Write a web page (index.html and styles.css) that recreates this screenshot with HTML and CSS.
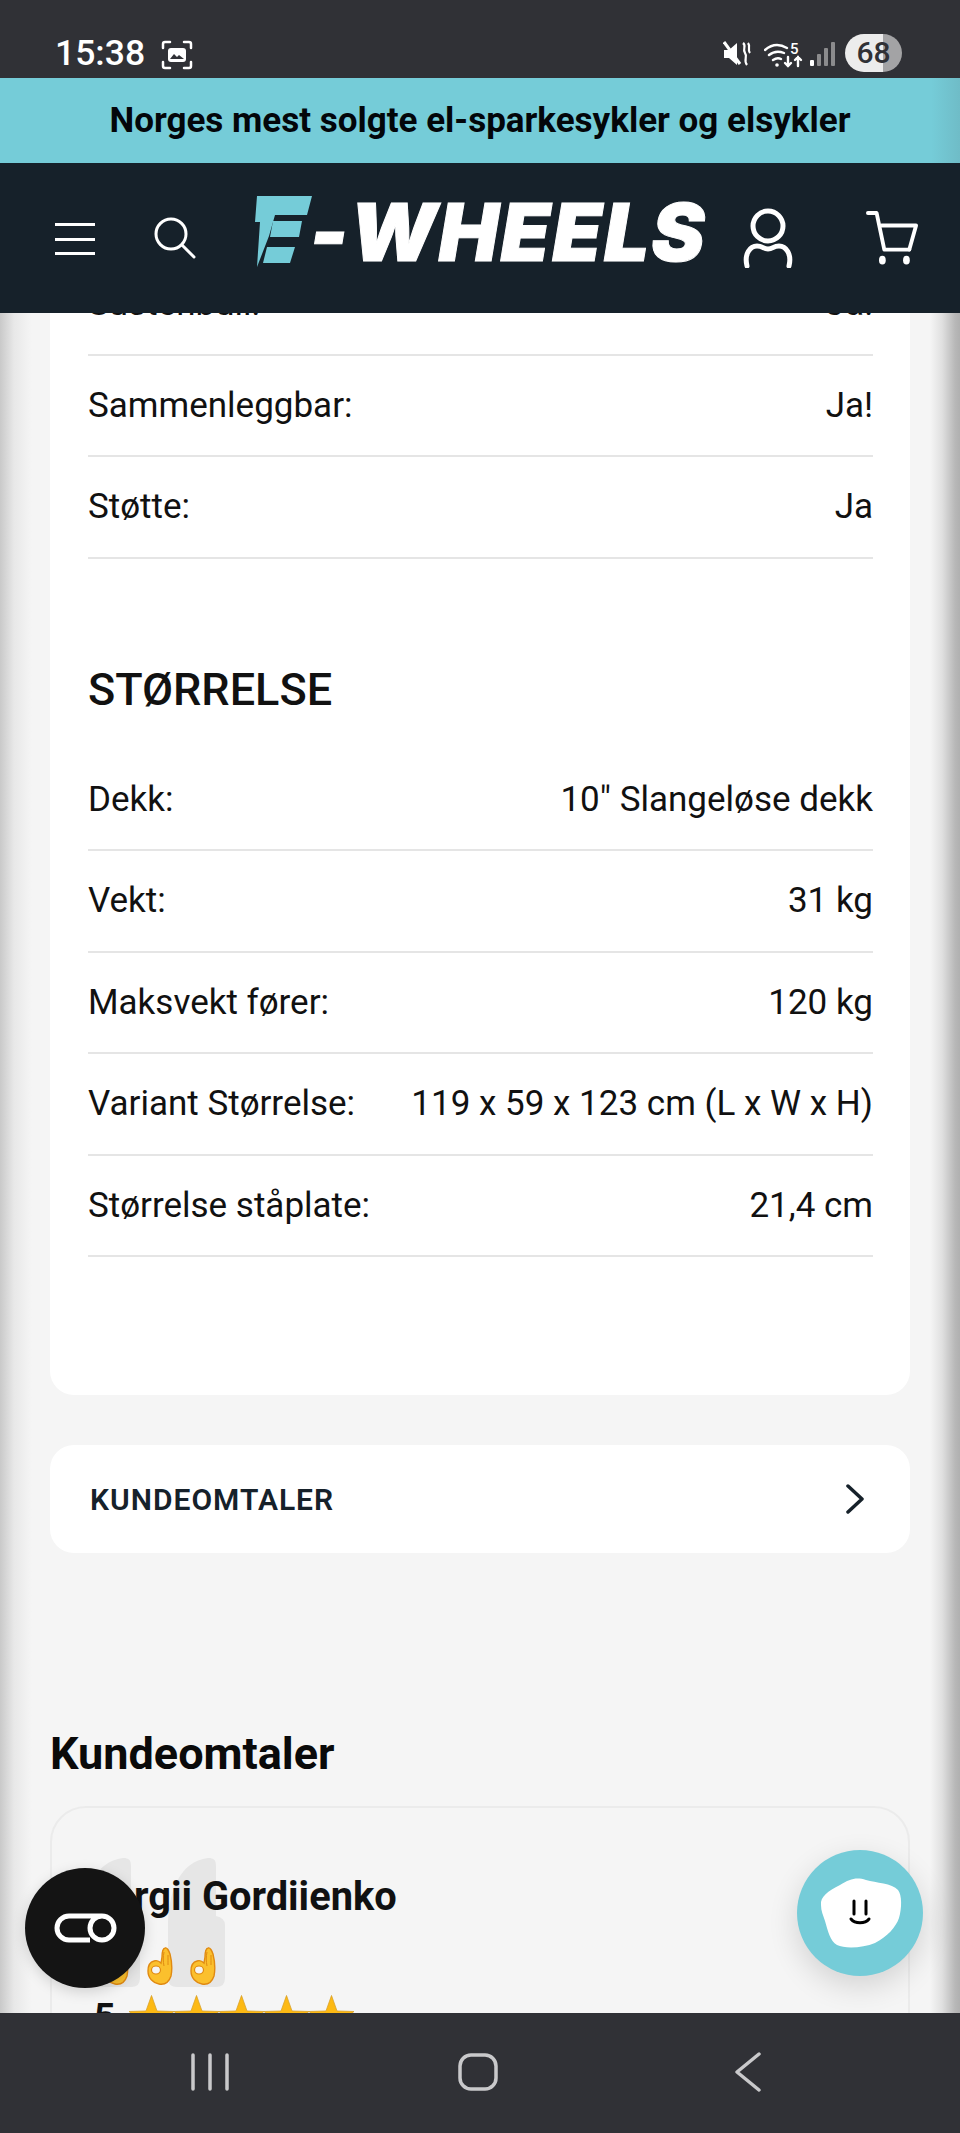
FILE: index.html
```html
<!DOCTYPE html>
<html lang="no">

<head>
    <meta charset="UTF-8">
    <title>E-Wheels</title>
    <link rel="stylesheet" href="styles.css">
</head>

<body>
    <svg class="defs" width="0" height="0">
        <symbol id="okhand" viewBox="0 0 26 38">
            <path d="M18 1c-3 1-3 5-3 9l-1 6c-2-2-4-3-7-2-4 1-6 5-6 10 0 7 5 12 11 13 6 1 10-2 12-8 1-5 1-14-1-22-1-3-3-7-5-6z" fill="#fbc02d" stroke="#e08a12" stroke-width="1.4"/>
            <ellipse cx="9" cy="23" rx="4.5" ry="4" fill="#f5f5f5" stroke="#e08a12" stroke-width="1.2"/>
            <path d="M17 5c-1 5-1 9 0 14M21 8c0 4 0 7 0 10" fill="none" stroke="#e08a12" stroke-width="1"/>
        </symbol>
        <symbol id="star" viewBox="0 0 45 43">
            <path d="M22.5 0.5l5.5 15.500 17 0.500-13 10 5 16-14.500-9.500-14.500 9.500 5-16-13-10 17-0.500z" fill="#fdb913" stroke="#d9a227" stroke-width="0.8"/>
        </symbol>
    </svg>

    <div class="phone">
        <div class="statusbar">
            <div class="status-left">
                <span class="clock">15:38</span>
                <svg class="ic-shot" width="32" height="30" viewBox="0 0 32 30" fill="none" stroke="#fff" stroke-width="2.500" stroke-linecap="round">
                    <path d="M2 8V4q0-2 2-2h5M23 2h5q2 0 2 2v4M30 22v4q0 2-2 2h-5M9 28H4q-2 0-2-2v-4"/>
                    <rect x="7" y="8" width="18" height="14" rx="3" fill="#fff" stroke="none"/>
                    <path d="M9 19l4-5 3 3 2-2 5 4z" fill="#303136" stroke="none"/>
                </svg>
            </div>
            <div class="status-right">
                <svg width="28" height="26" viewBox="0 0 28 26" fill="none">
                    <path d="M1 9h5l8-7v22l-8-7H1z" fill="#fff"/>
                    <path d="M1 1l16 22" stroke="#fff" stroke-width="3"/>
                    <path d="M20 2c4 3-1 6 2 10s-2 7 2 12M25 2c3 4-1 6 2 10" stroke="#fff" stroke-width="2.200"/>
                </svg>
                <svg class="ic-wifi" width="40" height="28" viewBox="0 0 40 28" fill="none" stroke="#fff" stroke-width="2.400" stroke-linecap="round">
                    <path d="M1 9c7-6 15-6 22-2M5 14c5-4 10-4 15-2M9 19c3-2 6-2 8-1"/>
                    <circle cx="13" cy="24" r="1.800" fill="#fff" stroke="none"/>
                    <path d="M24 16v9M21 22l3 3 3-3M34 25v-9M31 19l3-3 3 3"/>
                    <text x="26" y="13" class="wifi-5">5</text>
                </svg>
                <svg class="ic-signal" width="25" height="26" viewBox="0 0 25 26" fill="#8b8b8d">
                    <rect x="0" y="19" width="4" height="6" rx="1" fill="#fff"/>
                    <rect x="7" y="13" width="4" height="12" rx="1"/>
                    <rect x="14" y="7" width="4" height="18" rx="1"/>
                    <rect x="21" y="1" width="4" height="24" rx="1"/>
                </svg>
                <div class="battery">68</div>
            </div>
        </div>

        <div class="banner">Norges mest solgte el-sparkesykler og elsykler</div>

        <header class="navbar">
            <div class="burger"><span></span><span></span><span></span></div>
            <svg class="ic-search" width="42" height="42" viewBox="0 0 42 42" fill="none" stroke="#fff" stroke-width="3" stroke-linecap="round">
                <circle cx="17" cy="17" r="15"/>
                <path d="M28 28l12 12"/>
            </svg>
            <div class="logo">
                <svg class="logo-mark" width="58" height="72" viewBox="0 0 58 72" fill="#75ccd8">
                    <path d="M2 0H57L52 19H20L14 40L2 71L5 26H0z"/>
                    <path d="M18 25H47L44 41H15z"/>
                    <path d="M12 51H40L35 67H8z"/>
                </svg>
                <span class="logo-text">-WHEELS</span>
            </div>
            <svg class="ic-user" width="50" height="60" viewBox="0 0 50 60" fill="none" stroke="#fff" stroke-width="5" stroke-linecap="round">
                <circle cx="25" cy="18" r="15"/>
                <path d="M4 58c-3-12 3-20 10-20 6 0 6 3 11 3s5-3 11-3c7 0 13 8 10 20"/>
            </svg>
            <svg class="ic-cart" width="52" height="56" viewBox="0 0 54 58" fill="none" stroke="#fff" stroke-width="4" stroke-linejoin="round" stroke-linecap="round">
                <path d="M2 3h9l8 38h26"/>
                <path d="M16 16h36l-7 25"/>
                <ellipse cx="17" cy="52" rx="3.500" ry="4.500" fill="#fff" stroke="none"/>
                <ellipse cx="42" cy="52" rx="3.500" ry="4.500" fill="#fff" stroke="none"/>
            </svg>
        </header>

        <main class="content">
            <section class="card spec-card">
                <div class="spec-row"><span>Sustenbull:</span><span>Ja!</span></div>
                <div class="spec-row"><span>Sammenleggbar:</span><span>Ja!</span></div>
                <div class="spec-row"><span>Støtte:</span><span>Ja</span></div>

                <h2 class="spec-title">STØRRELSE</h2>
                <div class="spec-row"><span>Dekk:</span><span>10" Slangeløse dekk</span></div>
                <div class="spec-row"><span>Vekt:</span><span>31 kg</span></div>
                <div class="spec-row"><span>Maksvekt fører:</span><span>120 kg</span></div>
                <div class="spec-row"><span>Variant Størrelse:</span><span>119 x 59 x 123 cm (L x W x H)</span></div>
                <div class="spec-row"><span>Størrelse ståplate:</span><span>21,4 cm</span></div>
            </section>

            <div class="card accordion">
                <span>KUNDEOMTALER</span>
                <svg width="18" height="30" viewBox="0 0 18 30" fill="none" stroke="#16212a" stroke-width="3.500" stroke-linecap="round" stroke-linejoin="round">
                    <path d="M2 2l14 13L2 28"/>
                </svg>
            </div>

            <h2 class="reviews-title">Kundeomtaler</h2>
            <section class="review">
                <svg class="quote" width="146" height="131" viewBox="0 0 146 131" fill="#e6e6e6">
                    <path d="M4 70c0-35 12-66 40-69 6 0 8 2 8 8v50q9 2 9 9v53q0 9-9 9H13q-9 0-9-9z"/>
                    <path d="M89 70c0-35 12-66 40-69 6 0 8 2 8 8v50q9 2 9 9v53q0 9-9 9H98q-9 0-9-9z"/>
                </svg>
                <div class="review-name">Sergii Gordiienko</div>
                <div class="review-emoji">
                    <svg width="26" height="38"><use href="#okhand"/></svg>
                    <svg width="26" height="38"><use href="#okhand"/></svg>
                    <svg width="26" height="38"><use href="#okhand"/></svg>
                </div>
                <div class="review-score">
                    <span>5</span>
                    <div class="stars">
                        <svg width="45" height="43"><use href="#star"/></svg>
                        <svg width="45" height="43"><use href="#star"/></svg>
                        <svg width="45" height="43"><use href="#star"/></svg>
                        <svg width="45" height="43"><use href="#star"/></svg>
                        <svg width="45" height="43"><use href="#star"/></svg>
                    </div>
                </div>
            </section>
        </main>

        <nav class="bottombar">
            <svg width="38" height="38" viewBox="0 0 38 38" stroke="#c9c9cb" stroke-width="3.500" stroke-linecap="round">
                <path d="M2 2v34M19 2v34M36 2v34"/>
            </svg>
            <svg width="40" height="38" viewBox="0 0 40 38" fill="none" stroke="#c9c9cb" stroke-width="3.500">
                <rect x="2" y="2" width="36" height="34" rx="11"/>
            </svg>
            <svg class="ic-back" width="26" height="40" viewBox="0 0 26 40" fill="none" stroke="#c9c9cb" stroke-width="3.500" stroke-linecap="round" stroke-linejoin="round">
                <path d="M24 2L2 20l22 18"/>
            </svg>
        </nav>

        <div class="float-loyalty">
            <svg width="64" height="30" viewBox="0 0 64 30" fill="none" stroke="#fff" stroke-width="5">
                <path d="M37 27H16a12 12 0 0 1 0-24h33a12 12 0 0 1 0 24 12 12 0 0 1 0-24"/>
            </svg>
        </div>
        <div class="float-chat">
            <svg width="84" height="72" viewBox="0 0 84 72">
                <path d="M3 28C2 20 10 14 22 8 32 2 38 0 48 3c10 3 26 3 32 10 4 5 4 18 1 28-3 9-12 19-24 25-12 5-30 6-38 2C12 64 10 54 7 44 5 38 3 34 3 28z" fill="#fff"/>
                <path d="M36 24v13M48 24v13" stroke="#000" stroke-width="3" stroke-linecap="round" fill="none"/>
                <path d="M33 42c4 5 14 5 18 0" stroke="#000" stroke-width="3" stroke-linecap="round" fill="none"/>
            </svg>
        </div>
    </div>
</body>

</html>
```

FILE: styles.css
```css
* {
    margin: 0;
    padding: 0;
    box-sizing: border-box;
}

body {
    width: 960px;
    height: 2133px;
    overflow: hidden;
    font-family: Roboto, "Liberation Sans", sans-serif;
    color: #111;
    background: #f5f5f5;
}

.defs {
    position: absolute;
}

.phone {
    position: relative;
    width: 960px;
    height: 2133px;
    display: flex;
    flex-direction: column;
    overflow: hidden;
}

/* status bar */
.statusbar {
    height: 78px;
    flex: none;
    background: #303136;
    color: #fff;
    display: flex;
    justify-content: space-between;
    padding: 32px 58px 0 55px;
}

.status-left {
    display: flex;
    align-items: flex-start;
    gap: 16px;
}

.clock {
    font-size: 35.500px;
    line-height: 42px;
    font-weight: 500;
}

.ic-shot {
    margin-top: 8px;
}

.status-right {
    display: flex;
    align-items: flex-start;
}

.status-right svg {
    margin-top: 9px;
}

.status-right .ic-wifi {
    margin-left: 13px;
}

.status-right .ic-signal {
    margin-left: 6px;
}

.wifi-5 {
    font-size: 15px;
    font-weight: 500;
    fill: #fff;
    stroke: none;
}

.battery {
    width: 57px;
    height: 38px;
    margin-left: 10px;
    margin-top: 2px;
    border-radius: 19px;
    background: linear-gradient(to right, #ececec 67%, #a3a3a5 67%);
    color: #303136;
    font-size: 30px;
    font-weight: 500;
    line-height: 38px;
    text-align: center;
}

/* banner + nav */
.banner {
    height: 85px;
    flex: none;
    background: linear-gradient(to right, #75ccd8 97%, #6fbcc7);
    color: #03060a;
    font-size: 35px;
    font-weight: 700;
    line-height: 85px;
    text-align: center;
}

.navbar {
    height: 150px;
    flex: none;
    background: #16212a;
    display: flex;
    align-items: center;
    padding-left: 55px;
}

.burger {
    width: 40px;
    display: flex;
    flex-direction: column;
    gap: 11.500px;
    margin-top: 2px;
}

.burger span {
    height: 3px;
    background: #fff;
}

.ic-search {
    margin-left: 59px;
}

.logo {
    display: flex;
    align-items: center;
    margin-left: 59px;
    margin-top: -12px;
    width: 451px;
}

.logo-mark {
    flex: none;
}

.logo-text {
    flex: none;
    white-space: nowrap;
    color: #fff;
    font-family: Inter, Roboto, sans-serif;
    font-size: 80px;
    font-weight: 900;
    font-style: italic;
    letter-spacing: 2px;
    line-height: 72px;
    margin-left: -3px;
    -webkit-text-stroke: 1px #fff;
}

.ic-user {
    margin-left: 37px;
}

.ic-cart {
    margin-left: 73px;
}

/* main column */
.content {
    flex: 1;
    min-height: 0;
    overflow: hidden;
    padding: 0 50px;
    background: linear-gradient(to right, #c9c9c9, #e8e8e8 14px, #f5f5f5 32px, #f5f5f5 930px, #e0e0e0 942px, #b8b8b8 955px, #b0b0b0);
}

.card {
    background: #fff;
    border-radius: 24px;
}

.spec-card {
    margin-top: -59px;
    padding: 0 37px 138px 38px;
}

.spec-row {
    height: 101.5px;
    display: flex;
    justify-content: space-between;
    align-items: center;
    font-size: 35px;
    color: #111;
    border-bottom: 2px solid #e5e5e5;
}

.spec-title {
    font-size: 45px;
    font-weight: 500;
    line-height: 50px;
    margin-top: 106px;
    margin-bottom: 35px;
    color: #111;
}

.accordion {
    height: 108px;
    margin-top: 50px;
    padding: 0 46px 0 40px;
    display: flex;
    justify-content: space-between;
    align-items: center;
    font-size: 30px;
    font-weight: 600;
    letter-spacing: 1px;
    color: #16212a;
}

.reviews-title {
    font-size: 45px;
    font-weight: 700;
    line-height: 50px;
    margin-top: 176px;
    color: #0a0a0a;
}

.review {
    position: relative;
    height: 400px;
    margin-top: 27px;
    padding: 66px 36px 0;
    border: 2px solid #ebebeb;
    border-radius: 36px;
}

.quote {
    position: absolute;
    left: 27px;
    top: 49px;
}

.review-name {
    position: relative;
    font-size: 39.800px;
    font-weight: 700;
    line-height: 46px;
}

.review-emoji {
    position: relative;
    display: flex;
    gap: 17.500px;
    margin-top: 27px;
    margin-left: 15px;
}

.review-score {
    position: relative;
    display: flex;
    align-items: flex-start;
    margin-top: 10px;
    margin-left: 6px;
}

.review-score span {
    font-size: 37px;
    font-weight: 700;
    line-height: 28px;
    margin-top: 8px;
}

.stars {
    display: flex;
    margin-left: 14px;
}

.stars svg {
    display: block;
}

/* system nav */
.bottombar {
    position: relative;
    z-index: 2;
    height: 120px;
    flex: none;
    background: #303136;
    display: flex;
    align-items: center;
    padding-left: 191px;
    gap: 229px;
    padding-bottom: 2px;
}

.ic-back {
    margin-left: 8px;
}

/* floating buttons */
.float-loyalty {
    position: absolute;
    left: 25px;
    top: 1868px;
    width: 120px;
    height: 120px;
    border-radius: 50%;
    background: #141414;
    box-shadow: 0 4px 14px rgba(0, 0, 0, 0.15);
    display: flex;
    align-items: center;
    justify-content: center;
}

.float-chat {
    position: absolute;
    left: 797px;
    top: 1850px;
    width: 126px;
    height: 126px;
    border-radius: 50%;
    background: #75ccd8;
    box-shadow: 0 10px 30px rgba(0, 0, 0, 0.14);
    display: flex;
    align-items: center;
    justify-content: center;
}
```
